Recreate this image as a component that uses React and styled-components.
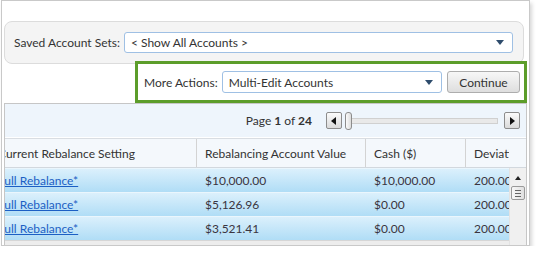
import styled, { createGlobalStyle } from "styled-components";

const GlobalStyle = createGlobalStyle`
  body {
    margin: 0;
    background: #fff;
    font-family: Lato, "Open Sans", sans-serif;
    font-size: 12px;
    color: #333;
  }
`;

const Frame = styled.div`
  box-sizing: border-box;
  margin-left: 1px;
  width: 529px;
  height: 246px;
  border: 1px solid #c9c9c9;
  box-shadow: 2px 3px 4px rgba(0, 0, 0, 0.16);
  padding: 20px 0 0 2px;
  display: flex;
  flex-direction: column;
  overflow: hidden;
  background: #fff;
`;

const SavedPanel = styled.div`
  box-sizing: border-box;
  height: 43px;
  margin-right: 5px;
  border: 1px solid #dcdcdc;
  border-radius: 8px;
  background: #f4f4f4;
  display: flex;
  align-items: center;
  padding: 0 10px 0 9px;
`;

const Label = styled.span`
  white-space: nowrap;
  margin-right: 4px;
`;

const Select = styled.div`
  box-sizing: border-box;
  flex: 1;
  height: ${({ $h }) => $h || 21}px;
  border: 1px solid #9fc0e4;
  border-radius: 3px;
  background: #fff;
  display: flex;
  align-items: center;
  justify-content: space-between;
  padding: 0 8px 0 6px;
  white-space: nowrap;
`;

const Caret = styled.span`
  width: 0;
  height: 0;
  border-left: 4px solid transparent;
  border-right: 4px solid transparent;
  border-top: 5px solid #2e4c6c;
`;

const ActionsRow = styled.div`
  display: flex;
  justify-content: flex-end;
  padding-right: 2px;
  margin-top: -3px;
  position: relative;
  z-index: 1;
`;

const Highlight = styled.div`
  box-sizing: border-box;
  width: 392px;
  height: 42px;
  border: 3px solid #5c9d2a;
  background: #fff;
  display: flex;
  align-items: center;
  padding: 0 4px 0 6px;
`;

const Button = styled.button`
  box-sizing: border-box;
  width: 73px;
  height: 22px;
  margin-left: 5px;
  border: 1px solid #adadad;
  border-radius: 3px;
  background: linear-gradient(#f7f7f7, #dedede);
  font: inherit;
  color: #333;
  padding: 0;
`;

const Grid = styled.div`
  flex: 1;
  margin-right: 2px;
  border: 1px solid #c6c6c6;
  border-bottom: none;
  background: #eef5fc;
  display: flex;
  flex-direction: column;
  min-height: 0;
`;

const Pager = styled.div`
  height: 33px;
  display: flex;
  align-items: center;
  justify-content: flex-end;
  padding-right: 6px;
  border-bottom: 1px solid #fff;
`;

const PageText = styled.span`
  margin-right: 14px;
  b {
    font-weight: 700;
  }
`;

const Slider = styled.div`
  width: 194px;
  display: flex;
  align-items: center;
`;

const ArrowBtn = styled.div`
  box-sizing: border-box;
  width: 16px;
  height: 17px;
  border: 1px solid #8c8c8c;
  border-radius: 2px;
  background: linear-gradient(#fbfbfb, #dadada);
  display: flex;
  align-items: center;
  justify-content: center;
  &::after {
    content: "";
    width: 0;
    height: 0;
    border-top: 4px solid transparent;
    border-bottom: 4px solid transparent;
    ${({ $dir }) =>
      $dir === "left"
        ? "border-right: 5px solid #111; margin-right: 1px;"
        : "border-left: 5px solid #111; margin-left: 1px;"}
  }
`;

const Thumb = styled.div`
  box-sizing: border-box;
  width: 7px;
  height: 18px;
  margin-left: 3px;
  border: 1px solid #8c8c8c;
  border-radius: 3px;
  background: linear-gradient(90deg, #fbfbfb, #dcdcdc);
`;

const Track = styled.div`
  flex: 1;
  height: 4px;
  margin-right: 6px;
  border: 1px solid #d0d0d0;
  border-left: none;
  background: #e9e9e9;
`;

const Header = styled.div`
  height: 30px;
  display: flex;
  background: #f4f8fc;
  border-top: 1px solid #d9dde2;
  border-bottom: 1px solid #d2d8de;
  box-sizing: border-box;
`;

const Clip = styled.div`
  flex: 1;
  overflow: hidden;
  display: flex;
  flex-direction: column;
`;

const Line = styled.div`
  display: flex;
  margin-left: -15px;
  height: ${({ $h }) => $h}px;
  flex-shrink: 0;
`;

const HeadCell = styled.div`
  box-sizing: border-box;
  width: ${({ $w }) => $w}px;
  flex-shrink: 0;
  padding-left: 8px;
  border-right: 1px solid #d3d3d3;
  display: flex;
  align-items: center;
  white-space: nowrap;
  overflow: hidden;
`;

const Filler = styled.div`
  width: 17px;
`;

const Body = styled.div`
  flex: 1;
  display: flex;
  min-height: 0;
`;

const Row = styled.div`
  box-sizing: border-box;
  height: 24px;
  flex-shrink: 0;
  display: flex;
  margin-left: -15px;
  border-top: 1px solid #eaf6fd;
  background: linear-gradient(#dbf0fc, #b0ddf6);
`;

const Cell = styled.div`
  box-sizing: border-box;
  width: ${({ $w }) => $w}px;
  flex-shrink: 0;
  padding-left: 8px;
  display: flex;
  align-items: center;
  white-space: nowrap;
  overflow: hidden;
  color: #3a3440;
`;

const Link = styled.a`
  color: #1c5fc4;
  text-decoration: underline;
  cursor: pointer;
`;

const Strip = styled.div`
  flex: 1;
  background: #ededed;
  border-top: 1px solid #d6d6d6;
`;

const VScroll = styled.div`
  box-sizing: border-box;
  width: 17px;
  background: #f0f0f0;
  border-left: 1px solid #e3e3e3;
  display: flex;
  flex-direction: column;
  align-items: center;
  padding-top: 8px;
`;

const UpArrow = styled.div`
  width: 0;
  height: 0;
  border-left: 3px solid transparent;
  border-right: 3px solid transparent;
  border-bottom: 4px solid #222;
`;

const ScrollThumb = styled.div`
  box-sizing: border-box;
  width: 14px;
  height: 14px;
  margin-top: 6px;
  border: 1px solid #9a9a9a;
  border-radius: 2px;
  background: linear-gradient(90deg, #f8f8f8, #e0e0e0);
  display: flex;
  flex-direction: column;
  align-items: center;
  justify-content: center;
  gap: 2px;
  span {
    width: 6px;
    height: 1px;
    background: #666;
  }
`;

const cols = [207, 169, 100, 100];

const rows = [
  { value: "$10,000.00", cash: "$10,000.00", dev: "200.00%" },
  { value: "$5,126.96", cash: "$0.00", dev: "200.00%" },
  { value: "$3,521.41", cash: "$0.00", dev: "200.00%" },
];

export default function App() {
  return (
    <>
      <GlobalStyle />
      <Frame>
        <SavedPanel>
          <Label>Saved Account Sets:</Label>
          <Select>
            &lt; Show All Accounts &gt;
            <Caret />
          </Select>
        </SavedPanel>
        <ActionsRow>
          <Highlight>
            <Label>More Actions:</Label>
            <Select $h={22}>
              Multi-Edit Accounts
              <Caret />
            </Select>
            <Button>Continue</Button>
          </Highlight>
        </ActionsRow>
        <Grid>
          <Pager>
            <PageText>
              Page <b>1</b> of <b>24</b>
            </PageText>
            <Slider>
              <ArrowBtn $dir="left" />
              <Thumb />
              <Track />
              <ArrowBtn $dir="right" />
            </Slider>
          </Pager>
          <Header>
            <Clip>
              <Line $h={28}>
                <HeadCell $w={cols[0]}>Current Rebalance Setting</HeadCell>
                <HeadCell $w={cols[1]}>Rebalancing Account Value</HeadCell>
                <HeadCell $w={cols[2]}>Cash ($)</HeadCell>
                <HeadCell $w={cols[3]}>Deviation</HeadCell>
              </Line>
            </Clip>
            <Filler />
          </Header>
          <Body>
            <Clip>
              {rows.map((r, i) => (
                <Row key={i}>
                  <Cell $w={cols[0]}>
                    <Link>Full Rebalance*</Link>
                  </Cell>
                  <Cell $w={cols[1]}>{r.value}</Cell>
                  <Cell $w={cols[2]}>{r.cash}</Cell>
                  <Cell $w={cols[3]}>{r.dev}</Cell>
                </Row>
              ))}
              <Strip />
            </Clip>
            <VScroll>
              <UpArrow />
              <ScrollThumb>
                <span />
                <span />
                <span />
              </ScrollThumb>
            </VScroll>
          </Body>
        </Grid>
      </Frame>
    </>
  );
}
